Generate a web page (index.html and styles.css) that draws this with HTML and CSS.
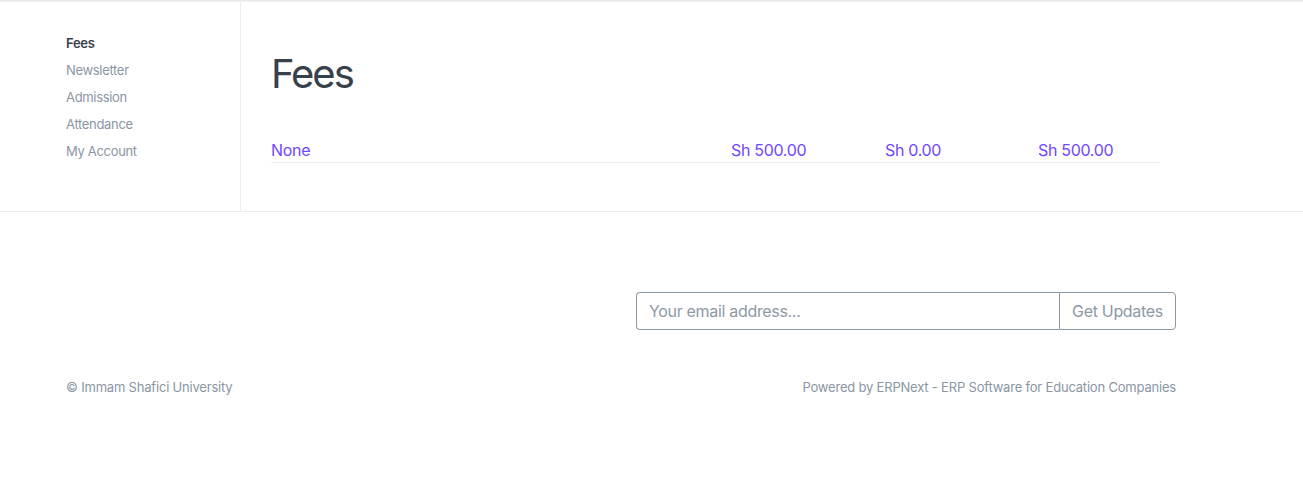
FILE: index.html
```html
<!DOCTYPE html>
<html>
<head>
<meta charset="utf-8">
<link rel="stylesheet" href="styles.css">
</head>
<body>
<div class="topbar"></div>
<div class="page">
  <nav class="sidebar">
    <a class="side-item active">Fees</a>
    <a class="side-item">Newsletter</a>
    <a class="side-item">Admission</a>
    <a class="side-item">Attendance</a>
    <a class="side-item">My Account</a>
  </nav>
  <main class="main">
    <h1 class="title">Fees</h1>
    <div class="row">
      <a class="cell">None</a>
      <a class="cell">Sh 500.00</a>
      <a class="cell">Sh 0.00</a>
      <a class="cell">Sh 500.00</a>
    </div>
  </main>
</div>
<footer class="footer">
  <form class="subscribe">
    <input class="email" type="text" placeholder="Your email address...">
    <button class="btn" type="button">Get Updates</button>
  </form>
  <div class="footer-bottom">
    <span>© Immam Shafici University</span>
    <span>Powered by ERPNext - ERP Software for Education Companies</span>
  </div>
</footer>
</body>
</html>
```

FILE: styles.css
```css
* { box-sizing: border-box; }
body {
  margin: 0;
  font-family: Inter, "Noto Sans", sans-serif;
  letter-spacing: -0.02em;
  color: #36414c;
  background: #fff;
}
.topbar {
  height: 2px;
  background: linear-gradient(#e8e8e8, #f4f4f4);
}
.page {
  display: flex;
  border-bottom: 1px solid #ebeef0;
  height: 210px;
}
.sidebar {
  width: 241px;
  border-right: 1px solid #ebeef0;
  padding: 28px 0 0 66px;
  display: flex;
  flex-direction: column;
}
.side-item {
  font-size: 13px;
  line-height: 27px;
  color: #8a96a3;
  text-decoration: none;
}
.side-item.active {
  color: #36414c;
  font-weight: 600;
}
.main {
  padding: 48px 0 0 30px;
  width: 919px;
}
.title {
  margin: 0;
  font-size: 40px;
  line-height: 48px;
  font-weight: 400;
  letter-spacing: -0.05em;
  color: #36414c;
}
.row {
  margin-top: 40px;
  display: grid;
  grid-template-columns: 460px 154px 153px 1fr;
  border-bottom: 1px solid #ebeef0;
}
.cell {
  font-size: 16px;
  line-height: 24px;
  color: #7047ff;
}
.footer {
  padding: 80px 127px 0 66px;
}
.subscribe {
  display: flex;
  justify-content: flex-end;
  margin: 0;
}
.email {
  width: 423px;
  height: 38px;
  border: 1px solid #8d99a6;
  border-right: none;
  border-radius: 4px 0 0 4px;
  padding: 0 12px;
  font-family: Inter, "Noto Sans", sans-serif;
  letter-spacing: -0.02em;
  font-size: 16px;
  color: #36414c;
  outline: none;
}
.email::placeholder { color: #8d99a6; }
.btn {
  width: 117px;
  height: 38px;
  border: 1px solid #8d99a6;
  border-radius: 0 4px 4px 0;
  background: #fff;
  font-family: Inter, "Noto Sans", sans-serif;
  letter-spacing: -0.02em;
  font-size: 16px;
  color: #8d99a6;
  padding: 0;
}
.footer-bottom {
  margin-top: 47px;
  display: flex;
  justify-content: space-between;
  font-size: 13px;
  line-height: 20px;
  letter-spacing: -0.015em;
  color: #8a96a3;
}
```
